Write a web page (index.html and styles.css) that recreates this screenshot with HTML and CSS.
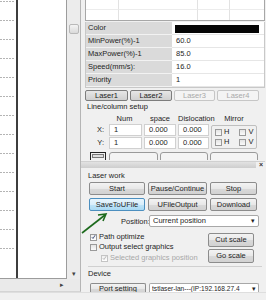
FILE: index.html
```html
<!DOCTYPE html>
<html>
<head>
<meta charset="utf-8">
<link rel="stylesheet" href="styles.css">
</head>
<body>
<div class="app">
  <div class="main">
    <div class="left">
      <div class="canvasrow">
        <div class="canvas">
          <svg width="66" height="278" viewBox="0 0 66 278">
            <defs>
              <pattern id="dash" width="3" height="19" patternUnits="userSpaceOnUse" y="1">
                <rect x="0" y="0" width="2" height="1" fill="#b4b4b4"/>
              </pattern>
            </defs>
            <rect x="0" y="0" width="15" height="260" fill="url(#dash)"/>
            <rect x="16" y="0" width="2" height="278" fill="#3e3e3e"/>
          </svg>
        </div>
        <div class="vscroll">
          <div class="thumb"></div>
          <span class="arrow-down">▾</span>
        </div>
      </div>
      <div class="hscroll"><span class="arrow-right">▸</span></div>
    </div>

    <div class="panel">
      <div class="toptable">
        <div class="tc c1"></div><div class="tc c2"></div><div class="tc c3"></div><div class="tc c4"></div>
        <div class="tc c1 b"></div><div class="tc c2 b"></div><div class="tc c3 b"></div><div class="tc c4 b"></div>
      </div>

      <div class="props">
        <div class="pl">Color</div><div class="pv"><div class="swatch"></div></div>
        <div class="pl">MinPower(%)-1</div><div class="pv">60.0</div>
        <div class="pl">MaxPower(%)-1</div><div class="pv">85.0</div>
        <div class="pl">Speed(mm/s):</div><div class="pv">16.0</div>
        <div class="pl">Priority</div><div class="pv">1</div>
      </div>

      <div class="lasers">
        <div class="lbtn on">Laser1</div>
        <div class="lbtn on">Laser2</div>
        <div class="lbtn off">Laser3</div>
        <div class="lbtn off">Laser4</div>
      </div>

      <div class="stitle">Line/column setup</div>
      <div class="setup">
        <div></div>
        <div class="hd">Num</div>
        <div class="hd">space</div>
        <div class="hd">Dislocation</div>
        <div class="hd">Mirror</div>
        <div class="ax">X:</div>
        <div class="inp">1</div>
        <div class="inp">0.000</div>
        <div class="inp">0.000</div>
        <div class="mirror">
          <div class="mrow"><span class="cb"></span><span>H</span><span class="cb v"></span><span>V</span></div>
          <div class="mrow"><span class="cb"></span><span>H</span><span class="cb v"></span><span>V</span></div>
        </div>
        <div class="ax">Y:</div>
        <div class="inp">1</div>
        <div class="inp">0.000</div>
        <div class="inp">0.000</div>
      </div>

      <div class="cutrow">
        <div class="ico"><div class="icoin"></div></div>
        <div class="cbtn"></div>
        <div class="cbtn"></div>
        <div class="cbtn"></div>
      </div>

      <div class="dock"><div class="dockbar"></div><span class="x">×</span></div>

      <div class="gtitle">Laser work</div>
      <div class="brow">
        <div class="btn w1">Start</div>
        <div class="btn w2">Pause/Continue</div>
        <div class="btn w3">Stop</div>
      </div>
      <div class="brow r2">
        <div class="btn w1 hot">SaveToUFile</div>
        <div class="btn w2">UFileOutput</div>
        <div class="btn w3">Download</div>
      </div>
      <div class="posrow">
        <span class="plabel">Position:</span>
        <div class="select"><span>Current position</span><span class="caret">▾</span></div>
      </div>
      <div class="opts">
        <div class="checks">
          <div class="chk"><span class="cb on"><svg width="6" height="6" viewBox="0 0 6 6"><path d="M1 3.2 L2.4 4.8 L5 0.8" fill="none" stroke="#2a3a6a" stroke-width="1"/></svg></span>Path optimize</div>
          <div class="chk"><span class="cb"></span>Output select graphics</div>
          <div class="chk dis"><span class="cb on"><svg width="6" height="6" viewBox="0 0 6 6"><path d="M1 3.2 L2.4 4.8 L5 0.8" fill="none" stroke="#b0b0b0" stroke-width="1"/></svg></span>Selected graphics position</div>
        </div>
        <div class="scales">
          <div class="btn sbtn">Cut scale</div>
          <div class="btn sbtn">Go scale</div>
        </div>
      </div>
      <div class="sep"></div>
      <div class="gtitle dev">Device</div>
      <div class="portrow">
        <div class="btn pbtn">Port setting</div>
        <div class="select psel"><span>tstlaser-lan---(IP:192.168.27.4</span><span class="caret">▾</span></div>
      </div>
    </div>
  </div>
  <div class="status"></div>

  <svg class="arrow" width="40" height="30" viewBox="0 0 40 30">
    <path d="M2 21 L25 3" stroke="#1d6a1d" stroke-width="1.6" fill="none"/>
    <path d="M18 3 L26 2 L23 9" stroke="#1d6a1d" stroke-width="1.6" fill="none"/>
  </svg>
</div>
</body>
</html>
```

FILE: styles.css
```css
* { box-sizing: border-box; }
html, body { margin: 0; padding: 0; }
body {
  width: 266px;
  height: 300px;
  overflow: hidden;
  background: #f0f0f0;
  font-family: "Liberation Sans", Arial, sans-serif;
  font-size: 7.5px;
  color: #1e1e1e;
}
.app { position: relative; width: 266px; height: 300px; }
.main { display: flex; height: 292px; }

/* left canvas */
.left { width: 81px; display: flex; flex-direction: column; }
.canvasrow { display: flex; height: 279px; }
.canvas {
  width: 67px;
  height: 279px;
  background: #fff;
  border-right: 1px solid #9c9c9c;
  border-bottom: 1px solid #9c9c9c;
}
.canvas svg { display: block; }
.vscroll {
  width: 14px;
  background: #ececec;
  border-right: 1px solid #b5b5b5;
  display: flex;
  flex-direction: column;
  align-items: center;
}
.thumb {
  margin-top: 24px;
  width: 10px;
  height: 10px;
  background: linear-gradient(#f4f4f4, #dadada);
  border: 1px solid #b9b9b9;
  border-radius: 2px;
}
.arrow-down { margin-top: auto; margin-bottom: 1px; font-size: 7px; color: #444; line-height: 8px; }
.hscroll {
  height: 13px;
  background: #eaeaea;
  border-right: 1px solid #b5b5b5;
  border-bottom: 1px solid #d4d4d4;
  display: flex;
  align-items: center;
  padding-left: 60px;
}
.arrow-right { font-size: 7px; color: #444; line-height: 8px; }

/* right panel */
.panel {
  width: 185px;
  padding: 0 1px 0 4px;
  display: flex;
  flex-direction: column;
  overflow: hidden;
}
.toptable {
  height: 21px;
  flex: none;
  background: #fff;
  border: 1px solid #a7a7a7;
  border-top: none;
  display: grid;
  grid-template-columns: 33px 79px 32px 1fr;
  grid-template-rows: 10px 10px;
}
.tc { border-right: 1px solid #e2e2e2; border-bottom: 1px solid #ececec; }
.tc.c4 { border-right: none; }
.tc.b { border-bottom: none; }

.props {
  margin-top: 1px;
  flex: none;
  display: grid;
  grid-template-columns: 86px 1fr;
  grid-auto-rows: 13px;
  border: 1px solid #c8c8c8;
  border-top: none;
  background: #fff;
}
.pl {
  background: #dadada;
  border-bottom: 1px solid #f2f2f2;
  padding-left: 2px;
  line-height: 12px;
  white-space: nowrap;
}
.pv {
  border-bottom: 1px solid #e6e6e6;
  padding-left: 4px;
  line-height: 12px;
}
.swatch { margin: 3px 0 0 -1px; width: 84px; height: 8px; background: #050505; }

.lasers {
  margin-top: 2px;
  flex: none;
  width: 176px;
  display: grid;
  grid-template-columns: 43px 42px 41px 42px;
  column-gap: 2px;
}
.lbtn {
  height: 11px;
  border-radius: 2px;
  text-align: center;
  line-height: 9px;
}
.lbtn.on { background: linear-gradient(#e6e6e6, #d0d0d0); border: 1px solid #7d7d7d; color: #222; }
.lbtn.off { background: #f4f4f4; border: 1px solid #c6c6c6; color: #a9a9a9; }

.stitle { margin-top: 2px; padding-left: 2px; height: 8px; line-height: 8px; flex: none; color: #222; }
.setup {
  margin-top: 4px;
  flex: none;
  display: grid;
  grid-template-columns: 22px 33px 32px 31px 46px;
  grid-template-rows: 8px 12px 12px;
  column-gap: 2px;
  row-gap: 1px;
}
.hd { text-align: center; line-height: 8px; }
.hd:nth-child(2) { padding-right: 2px; }
.ax { text-align: right; line-height: 12px; padding-right: 3px; }
.inp {
  background: #fff;
  border: 1px solid #d0d0d0;
  line-height: 10px;
  padding-left: 4px;
}
.mirror {
  grid-column: 5;
  grid-row: 2 / span 2;
  margin-top: 1px;
  border: 1px solid #bfbfbf;
  border-radius: 2px;
  display: flex;
  flex-direction: column;
  justify-content: space-around;
  padding: 1px 0 1px 3px;
}
.mrow { display: flex; align-items: center; line-height: 8px; }
.cb {
  width: 7px;
  height: 7px;
  border: 1px solid #9a9a9a;
  background: linear-gradient(#e4e4e4, #fafafa);
  display: inline-flex;
  align-items: center;
  justify-content: center;
  margin-right: 2px;
  flex: none;
}
.cb.v { margin-left: 10px; }
.cb svg { display: block; }

.cutrow {
  margin-top: 3px;
  height: 8px;
  flex: none;
  overflow: hidden;
  display: flex;
  column-gap: 2px;
  padding-left: 5px;
}
.ico { width: 16px; height: 9px; border: 1px solid #222; padding: 1px; margin-right: 1px; }
.icoin { height: 4px; border: 1px solid #777; background: #ddd; }
.cbtn {
  height: 14px;
  border: 1px solid #9a9a9a;
  border-radius: 3px;
  background: #f4f4f4;
}
.cbtn:nth-child(2) { width: 49px; }
.cbtn:nth-child(3) { width: 48px; }
.cbtn:nth-child(4) { width: 48px; }

.dock {
  margin: 1px 0 0 -4px;
  height: 7px;
  flex: none;
  display: flex;
  align-items: center;
  border-top: 1px solid #d0d0d0;
}
.dockbar { width: 175px; height: 6px; background: linear-gradient(#e2e2e2, #cdcdcd); }
.x { margin-left: 3px; font-size: 7px; font-weight: bold; line-height: 6px; color: #333; }

.gtitle { margin-top: 4px; padding-left: 3px; height: 8px; line-height: 8px; flex: none; }
.brow { margin-top: 2px; flex: none; display: flex; column-gap: 3px; padding-left: 4px; }
.brow.r2 { margin-top: 3px; }
.btn {
  height: 13px;
  border: 1px solid #8c8c8c;
  border-radius: 2px;
  background: linear-gradient(#f3f3f3 0%, #e8e8e8 50%, #d9d9d9 51%, #d2d2d2 100%);
  text-align: center;
  line-height: 11px;
  white-space: nowrap;
  overflow: hidden;
}
.w1 { width: 56px; }
.w2 { width: 59px; }
.w3 { width: 47px; }
.btn.hot {
  border-color: #4c8fbf;
  background: linear-gradient(#e8f5fd 0%, #d8eefb 50%, #bfe4f8 51%, #a9d9f3 100%);
}
.posrow { margin-top: 4px; flex: none; display: flex; align-items: center; padding-left: 36px; }
.plabel { width: 27px; }
.select {
  height: 12px;
  width: 110px;
  margin-left: 1px;
  background: #fff;
  border: 1px solid #a8a8a8;
  border-radius: 2px;
  display: flex;
  align-items: center;
  padding-left: 3px;
  line-height: 10px;
}
.select span:first-child { flex: 1; white-space: nowrap; overflow: hidden; }
.caret { font-size: 7px; padding: 0 3px 0 2px; color: #222; }

.opts { margin-top: 6px; flex: none; display: flex; height: 31px; }
.checks { width: 123px; padding-left: 5px; display: flex; flex-direction: column; row-gap: 2px; }
.chk { display: flex; align-items: center; height: 8px; line-height: 8px; white-space: nowrap; }
.chk.dis { padding-left: 11px; color: #a8a8a8; margin-top: 1px; }
.cb.on { background: linear-gradient(#f0f0f0, #fff); }
.chk.dis .cb { border-color: #c4c4c4; }
.scales { display: flex; flex-direction: column; row-gap: 2px; }
.sbtn { width: 46px; height: 14px; line-height: 12px; }

.sep { margin: 2px 3px 0 3px; height: 1px; background: #d0d0d0; flex: none; }
.gtitle.dev { margin-top: 3px; }
.portrow { margin-top: 5px; flex: none; display: flex; column-gap: 3px; padding-left: 5px; height: 10px; }
.pbtn { width: 56px; height: 10px; border-bottom: none; border-radius: 2px 2px 0 0; line-height: 10px; }
.psel {
  width: 110px;
  height: 10px;
  margin-left: 0;
  border-bottom: none;
  border-radius: 2px 2px 0 0;
  font-size: 6.6px;
  padding-left: 2px;
}
.psel .caret { padding: 0 2px 0 1px; }

.status { height: 8px; background: #f0f0f0; border-top: 1px solid #dedede; }

.arrow { position: absolute; left: 80px; top: 212px; }
```
